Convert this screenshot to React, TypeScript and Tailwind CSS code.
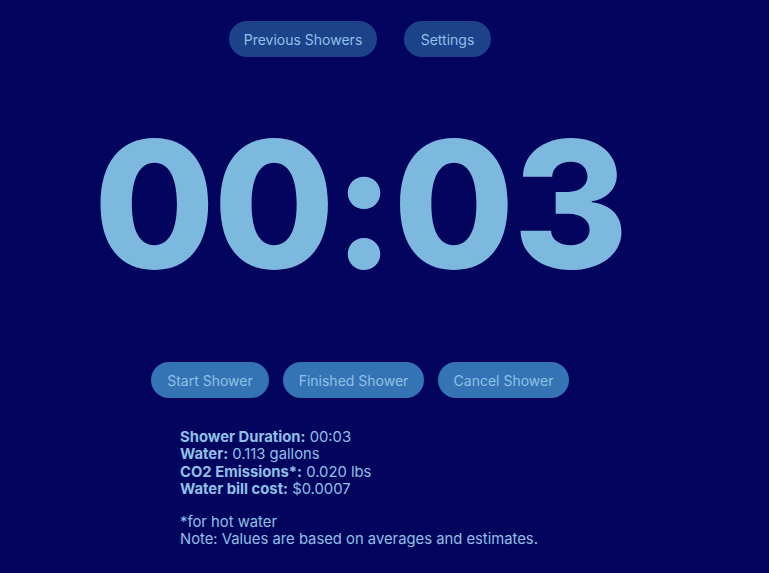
import React from "react";

export default function App() {
  const font = { fontFamily: "Inter, 'Noto Sans', sans-serif" };
  return (
    <div className="min-h-[573px] w-full bg-[#03045e]" style={font}>
      <div className="flex w-[720px] flex-col items-center pt-[21px]">
        <div className="flex gap-[27px]">
          <button className="h-[36px] w-[148px] rounded-full bg-[#1c4289] text-[14px] text-[#8fc0e6]">
            Previous Showers
          </button>
          <button className="h-[36px] w-[87px] rounded-full bg-[#1c4289] text-[14px] text-[#8fc0e6]">
            Settings
          </button>
        </div>
        <div className="mt-[22px] h-[250px] text-[176px] font-extrabold leading-[250px] tracking-[-2px] text-[#7db9de]">
          00:03
        </div>
        <div className="mt-[33px] flex gap-[14px]">
          <button className="h-[36px] w-[118px] rounded-full bg-[#3574b4] text-[14px] text-[#8fc0e6]">
            Start Shower
          </button>
          <button className="h-[36px] w-[141px] rounded-full bg-[#3574b4] text-[14px] text-[#8fc0e6]">
            Finished Shower
          </button>
          <button className="h-[36px] w-[131px] rounded-full bg-[#3574b4] text-[14px] text-[#8fc0e6]">
            Cancel Shower
          </button>
        </div>
        <div className="mt-[31px] self-start pl-[180px] text-[14.8px] leading-[17.4px] text-[#8fc0e6]">
          <div><span className="font-bold">Shower Duration:</span> 00:03</div>
          <div><span className="font-bold">Water:</span> 0.113 gallons</div>
          <div><span className="font-bold">CO2 Emissions*:</span> 0.020 lbs</div>
          <div><span className="font-bold">Water bill cost:</span> $0.0007</div>
          <div className="mt-[15px]">*for hot water</div>
          <div>Note: Values are based on averages and estimates.</div>
        </div>
      </div>
    </div>
  );
}
